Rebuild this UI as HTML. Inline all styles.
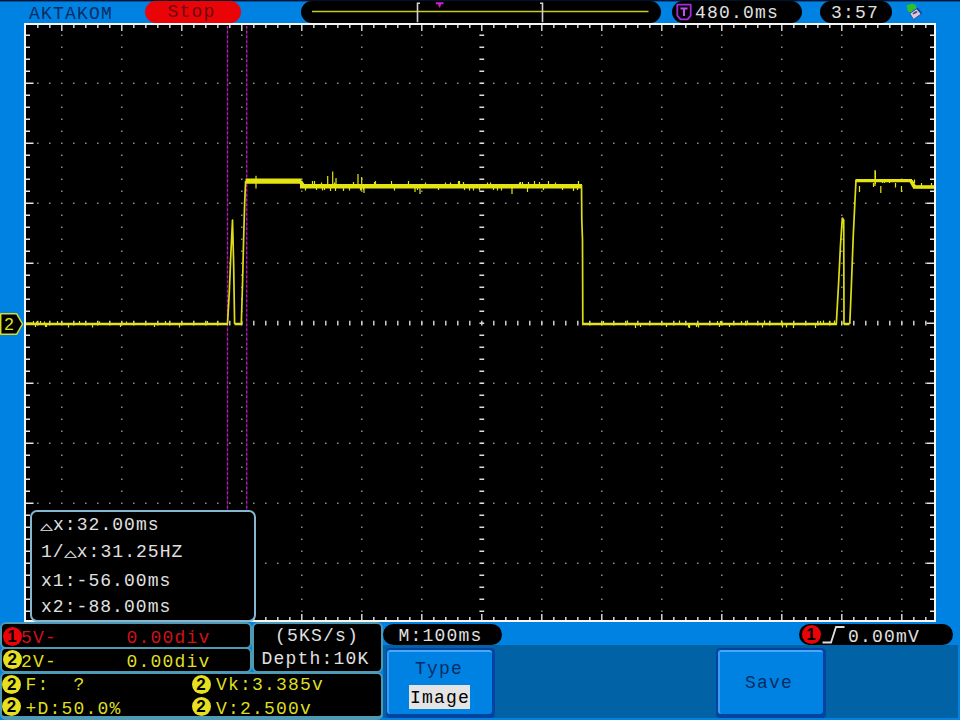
<!DOCTYPE html>
<html><head><meta charset="utf-8"><title>AKTAKOM</title>
<style>
html,body{margin:0;padding:0}
body{width:960px;height:720px;overflow:hidden;background:#0082e2;position:relative;font-family:"Liberation Mono","DejaVu Sans Mono",monospace;font-size:18px;letter-spacing:1.2px;line-height:20px;color:#e0e0e0;white-space:pre}
div,span{position:absolute;box-sizing:border-box}
.topline{left:0;top:0;width:960px;height:1px;background:#02122c;box-shadow:0 1px 0 rgba(2,30,80,0.45)}
.frame{left:24px;top:23px;width:912px;height:599px;border:2px solid #f6f6f6;background:#000}
svg{position:absolute;left:0;top:0}
.pill{background:#000;border-radius:11px}
.t{height:20px;line-height:20px}
.box{background:#000;border-radius:6px}
.bx{background:#000;border:2px solid #4e9ab4;border-radius:6px}
.ch{width:19px;height:19px;border-radius:9.5px;font-family:"Liberation Sans",sans-serif;font-weight:bold;font-size:17px;letter-spacing:0;line-height:19px;text-align:center;color:#000}
.y{color:#dede20} .r{color:#d0101a}
.nav{color:#062c62}
.cb{letter-spacing:1.05px}
.tri{position:static;display:inline-block;width:12px;font-size:14px;letter-spacing:0;text-align:center;transform:translate(-0.5px,0px) scale(1.55,0.85);transform-origin:50% 75%}
</style></head><body>
<div class="topline"></div>
<div class="t nav" style="left:29px;top:4px">AKTAKOM</div>
<div class="pill" style="left:144.5px;top:1px;width:96px;height:22px;background:#ea0408"></div>
<div class="t" style="left:167.5px;top:2px;color:#6a0810">Stop</div>
<div class="pill" style="left:301px;top:1px;width:360px;height:22px"></div>
<div class="pill" style="left:672px;top:1px;width:130px;height:22px"></div>
<div class="t" style="left:695px;top:3px">480.0ms</div>
<div class="pill" style="left:820px;top:1px;width:71.5px;height:22px"></div>
<div class="t" style="left:831px;top:3px">3:57</div>

<div class="frame"></div>

<div style="left:383px;top:645px;width:574.5px;height:72.5px;background:#0262a6"></div>

<svg width="960" height="720" viewBox="0 0 960 720">
<path d="M61.0 35.2h1.6M61.0 47.2h1.6M61.0 59.2h1.6M61.0 71.2h1.6M61.0 83.2h1.6M61.0 95.2h1.6M61.0 107.2h1.6M61.0 119.2h1.6M61.0 131.2h1.6M61.0 143.2h1.6M61.0 155.2h1.6M61.0 167.2h1.6M61.0 179.2h1.6M61.0 191.2h1.6M61.0 203.2h1.6M61.0 215.2h1.6M61.0 227.2h1.6M61.0 239.2h1.6M61.0 251.2h1.6M61.0 263.2h1.6M61.0 275.2h1.6M61.0 287.2h1.6M61.0 299.2h1.6M61.0 311.2h1.6M61.0 323.2h1.6M61.0 335.2h1.6M61.0 347.2h1.6M61.0 359.2h1.6M61.0 371.2h1.6M61.0 383.2h1.6M61.0 395.2h1.6M61.0 407.2h1.6M61.0 419.2h1.6M61.0 431.2h1.6M61.0 443.2h1.6M61.0 455.2h1.6M61.0 467.2h1.6M61.0 479.2h1.6M61.0 491.2h1.6M61.0 503.2h1.6M61.0 515.2h1.6M61.0 527.2h1.6M61.0 539.2h1.6M61.0 551.2h1.6M61.0 563.2h1.6M61.0 575.2h1.6M61.0 587.2h1.6M61.0 599.2h1.6M61.0 611.2h1.6M121.0 35.2h1.6M121.0 47.2h1.6M121.0 59.2h1.6M121.0 71.2h1.6M121.0 83.2h1.6M121.0 95.2h1.6M121.0 107.2h1.6M121.0 119.2h1.6M121.0 131.2h1.6M121.0 143.2h1.6M121.0 155.2h1.6M121.0 167.2h1.6M121.0 179.2h1.6M121.0 191.2h1.6M121.0 203.2h1.6M121.0 215.2h1.6M121.0 227.2h1.6M121.0 239.2h1.6M121.0 251.2h1.6M121.0 263.2h1.6M121.0 275.2h1.6M121.0 287.2h1.6M121.0 299.2h1.6M121.0 311.2h1.6M121.0 323.2h1.6M121.0 335.2h1.6M121.0 347.2h1.6M121.0 359.2h1.6M121.0 371.2h1.6M121.0 383.2h1.6M121.0 395.2h1.6M121.0 407.2h1.6M121.0 419.2h1.6M121.0 431.2h1.6M121.0 443.2h1.6M121.0 455.2h1.6M121.0 467.2h1.6M121.0 479.2h1.6M121.0 491.2h1.6M121.0 503.2h1.6M121.0 515.2h1.6M121.0 527.2h1.6M121.0 539.2h1.6M121.0 551.2h1.6M121.0 563.2h1.6M121.0 575.2h1.6M121.0 587.2h1.6M121.0 599.2h1.6M121.0 611.2h1.6M181.0 35.2h1.6M181.0 47.2h1.6M181.0 59.2h1.6M181.0 71.2h1.6M181.0 83.2h1.6M181.0 95.2h1.6M181.0 107.2h1.6M181.0 119.2h1.6M181.0 131.2h1.6M181.0 143.2h1.6M181.0 155.2h1.6M181.0 167.2h1.6M181.0 179.2h1.6M181.0 191.2h1.6M181.0 203.2h1.6M181.0 215.2h1.6M181.0 227.2h1.6M181.0 239.2h1.6M181.0 251.2h1.6M181.0 263.2h1.6M181.0 275.2h1.6M181.0 287.2h1.6M181.0 299.2h1.6M181.0 311.2h1.6M181.0 323.2h1.6M181.0 335.2h1.6M181.0 347.2h1.6M181.0 359.2h1.6M181.0 371.2h1.6M181.0 383.2h1.6M181.0 395.2h1.6M181.0 407.2h1.6M181.0 419.2h1.6M181.0 431.2h1.6M181.0 443.2h1.6M181.0 455.2h1.6M181.0 467.2h1.6M181.0 479.2h1.6M181.0 491.2h1.6M181.0 503.2h1.6M181.0 515.2h1.6M181.0 527.2h1.6M181.0 539.2h1.6M181.0 551.2h1.6M181.0 563.2h1.6M181.0 575.2h1.6M181.0 587.2h1.6M181.0 599.2h1.6M181.0 611.2h1.6M241.0 35.2h1.6M241.0 47.2h1.6M241.0 59.2h1.6M241.0 71.2h1.6M241.0 83.2h1.6M241.0 95.2h1.6M241.0 107.2h1.6M241.0 119.2h1.6M241.0 131.2h1.6M241.0 143.2h1.6M241.0 155.2h1.6M241.0 167.2h1.6M241.0 179.2h1.6M241.0 191.2h1.6M241.0 203.2h1.6M241.0 215.2h1.6M241.0 227.2h1.6M241.0 239.2h1.6M241.0 251.2h1.6M241.0 263.2h1.6M241.0 275.2h1.6M241.0 287.2h1.6M241.0 299.2h1.6M241.0 311.2h1.6M241.0 323.2h1.6M241.0 335.2h1.6M241.0 347.2h1.6M241.0 359.2h1.6M241.0 371.2h1.6M241.0 383.2h1.6M241.0 395.2h1.6M241.0 407.2h1.6M241.0 419.2h1.6M241.0 431.2h1.6M241.0 443.2h1.6M241.0 455.2h1.6M241.0 467.2h1.6M241.0 479.2h1.6M241.0 491.2h1.6M241.0 503.2h1.6M241.0 515.2h1.6M241.0 527.2h1.6M241.0 539.2h1.6M241.0 551.2h1.6M241.0 563.2h1.6M241.0 575.2h1.6M241.0 587.2h1.6M241.0 599.2h1.6M241.0 611.2h1.6M301.0 35.2h1.6M301.0 47.2h1.6M301.0 59.2h1.6M301.0 71.2h1.6M301.0 83.2h1.6M301.0 95.2h1.6M301.0 107.2h1.6M301.0 119.2h1.6M301.0 131.2h1.6M301.0 143.2h1.6M301.0 155.2h1.6M301.0 167.2h1.6M301.0 179.2h1.6M301.0 191.2h1.6M301.0 203.2h1.6M301.0 215.2h1.6M301.0 227.2h1.6M301.0 239.2h1.6M301.0 251.2h1.6M301.0 263.2h1.6M301.0 275.2h1.6M301.0 287.2h1.6M301.0 299.2h1.6M301.0 311.2h1.6M301.0 323.2h1.6M301.0 335.2h1.6M301.0 347.2h1.6M301.0 359.2h1.6M301.0 371.2h1.6M301.0 383.2h1.6M301.0 395.2h1.6M301.0 407.2h1.6M301.0 419.2h1.6M301.0 431.2h1.6M301.0 443.2h1.6M301.0 455.2h1.6M301.0 467.2h1.6M301.0 479.2h1.6M301.0 491.2h1.6M301.0 503.2h1.6M301.0 515.2h1.6M301.0 527.2h1.6M301.0 539.2h1.6M301.0 551.2h1.6M301.0 563.2h1.6M301.0 575.2h1.6M301.0 587.2h1.6M301.0 599.2h1.6M301.0 611.2h1.6M361.0 35.2h1.6M361.0 47.2h1.6M361.0 59.2h1.6M361.0 71.2h1.6M361.0 83.2h1.6M361.0 95.2h1.6M361.0 107.2h1.6M361.0 119.2h1.6M361.0 131.2h1.6M361.0 143.2h1.6M361.0 155.2h1.6M361.0 167.2h1.6M361.0 179.2h1.6M361.0 191.2h1.6M361.0 203.2h1.6M361.0 215.2h1.6M361.0 227.2h1.6M361.0 239.2h1.6M361.0 251.2h1.6M361.0 263.2h1.6M361.0 275.2h1.6M361.0 287.2h1.6M361.0 299.2h1.6M361.0 311.2h1.6M361.0 323.2h1.6M361.0 335.2h1.6M361.0 347.2h1.6M361.0 359.2h1.6M361.0 371.2h1.6M361.0 383.2h1.6M361.0 395.2h1.6M361.0 407.2h1.6M361.0 419.2h1.6M361.0 431.2h1.6M361.0 443.2h1.6M361.0 455.2h1.6M361.0 467.2h1.6M361.0 479.2h1.6M361.0 491.2h1.6M361.0 503.2h1.6M361.0 515.2h1.6M361.0 527.2h1.6M361.0 539.2h1.6M361.0 551.2h1.6M361.0 563.2h1.6M361.0 575.2h1.6M361.0 587.2h1.6M361.0 599.2h1.6M361.0 611.2h1.6M421.0 35.2h1.6M421.0 47.2h1.6M421.0 59.2h1.6M421.0 71.2h1.6M421.0 83.2h1.6M421.0 95.2h1.6M421.0 107.2h1.6M421.0 119.2h1.6M421.0 131.2h1.6M421.0 143.2h1.6M421.0 155.2h1.6M421.0 167.2h1.6M421.0 179.2h1.6M421.0 191.2h1.6M421.0 203.2h1.6M421.0 215.2h1.6M421.0 227.2h1.6M421.0 239.2h1.6M421.0 251.2h1.6M421.0 263.2h1.6M421.0 275.2h1.6M421.0 287.2h1.6M421.0 299.2h1.6M421.0 311.2h1.6M421.0 323.2h1.6M421.0 335.2h1.6M421.0 347.2h1.6M421.0 359.2h1.6M421.0 371.2h1.6M421.0 383.2h1.6M421.0 395.2h1.6M421.0 407.2h1.6M421.0 419.2h1.6M421.0 431.2h1.6M421.0 443.2h1.6M421.0 455.2h1.6M421.0 467.2h1.6M421.0 479.2h1.6M421.0 491.2h1.6M421.0 503.2h1.6M421.0 515.2h1.6M421.0 527.2h1.6M421.0 539.2h1.6M421.0 551.2h1.6M421.0 563.2h1.6M421.0 575.2h1.6M421.0 587.2h1.6M421.0 599.2h1.6M421.0 611.2h1.6M541.0 35.2h1.6M541.0 47.2h1.6M541.0 59.2h1.6M541.0 71.2h1.6M541.0 83.2h1.6M541.0 95.2h1.6M541.0 107.2h1.6M541.0 119.2h1.6M541.0 131.2h1.6M541.0 143.2h1.6M541.0 155.2h1.6M541.0 167.2h1.6M541.0 179.2h1.6M541.0 191.2h1.6M541.0 203.2h1.6M541.0 215.2h1.6M541.0 227.2h1.6M541.0 239.2h1.6M541.0 251.2h1.6M541.0 263.2h1.6M541.0 275.2h1.6M541.0 287.2h1.6M541.0 299.2h1.6M541.0 311.2h1.6M541.0 323.2h1.6M541.0 335.2h1.6M541.0 347.2h1.6M541.0 359.2h1.6M541.0 371.2h1.6M541.0 383.2h1.6M541.0 395.2h1.6M541.0 407.2h1.6M541.0 419.2h1.6M541.0 431.2h1.6M541.0 443.2h1.6M541.0 455.2h1.6M541.0 467.2h1.6M541.0 479.2h1.6M541.0 491.2h1.6M541.0 503.2h1.6M541.0 515.2h1.6M541.0 527.2h1.6M541.0 539.2h1.6M541.0 551.2h1.6M541.0 563.2h1.6M541.0 575.2h1.6M541.0 587.2h1.6M541.0 599.2h1.6M541.0 611.2h1.6M601.0 35.2h1.6M601.0 47.2h1.6M601.0 59.2h1.6M601.0 71.2h1.6M601.0 83.2h1.6M601.0 95.2h1.6M601.0 107.2h1.6M601.0 119.2h1.6M601.0 131.2h1.6M601.0 143.2h1.6M601.0 155.2h1.6M601.0 167.2h1.6M601.0 179.2h1.6M601.0 191.2h1.6M601.0 203.2h1.6M601.0 215.2h1.6M601.0 227.2h1.6M601.0 239.2h1.6M601.0 251.2h1.6M601.0 263.2h1.6M601.0 275.2h1.6M601.0 287.2h1.6M601.0 299.2h1.6M601.0 311.2h1.6M601.0 323.2h1.6M601.0 335.2h1.6M601.0 347.2h1.6M601.0 359.2h1.6M601.0 371.2h1.6M601.0 383.2h1.6M601.0 395.2h1.6M601.0 407.2h1.6M601.0 419.2h1.6M601.0 431.2h1.6M601.0 443.2h1.6M601.0 455.2h1.6M601.0 467.2h1.6M601.0 479.2h1.6M601.0 491.2h1.6M601.0 503.2h1.6M601.0 515.2h1.6M601.0 527.2h1.6M601.0 539.2h1.6M601.0 551.2h1.6M601.0 563.2h1.6M601.0 575.2h1.6M601.0 587.2h1.6M601.0 599.2h1.6M601.0 611.2h1.6M661.0 35.2h1.6M661.0 47.2h1.6M661.0 59.2h1.6M661.0 71.2h1.6M661.0 83.2h1.6M661.0 95.2h1.6M661.0 107.2h1.6M661.0 119.2h1.6M661.0 131.2h1.6M661.0 143.2h1.6M661.0 155.2h1.6M661.0 167.2h1.6M661.0 179.2h1.6M661.0 191.2h1.6M661.0 203.2h1.6M661.0 215.2h1.6M661.0 227.2h1.6M661.0 239.2h1.6M661.0 251.2h1.6M661.0 263.2h1.6M661.0 275.2h1.6M661.0 287.2h1.6M661.0 299.2h1.6M661.0 311.2h1.6M661.0 323.2h1.6M661.0 335.2h1.6M661.0 347.2h1.6M661.0 359.2h1.6M661.0 371.2h1.6M661.0 383.2h1.6M661.0 395.2h1.6M661.0 407.2h1.6M661.0 419.2h1.6M661.0 431.2h1.6M661.0 443.2h1.6M661.0 455.2h1.6M661.0 467.2h1.6M661.0 479.2h1.6M661.0 491.2h1.6M661.0 503.2h1.6M661.0 515.2h1.6M661.0 527.2h1.6M661.0 539.2h1.6M661.0 551.2h1.6M661.0 563.2h1.6M661.0 575.2h1.6M661.0 587.2h1.6M661.0 599.2h1.6M661.0 611.2h1.6M721.0 35.2h1.6M721.0 47.2h1.6M721.0 59.2h1.6M721.0 71.2h1.6M721.0 83.2h1.6M721.0 95.2h1.6M721.0 107.2h1.6M721.0 119.2h1.6M721.0 131.2h1.6M721.0 143.2h1.6M721.0 155.2h1.6M721.0 167.2h1.6M721.0 179.2h1.6M721.0 191.2h1.6M721.0 203.2h1.6M721.0 215.2h1.6M721.0 227.2h1.6M721.0 239.2h1.6M721.0 251.2h1.6M721.0 263.2h1.6M721.0 275.2h1.6M721.0 287.2h1.6M721.0 299.2h1.6M721.0 311.2h1.6M721.0 323.2h1.6M721.0 335.2h1.6M721.0 347.2h1.6M721.0 359.2h1.6M721.0 371.2h1.6M721.0 383.2h1.6M721.0 395.2h1.6M721.0 407.2h1.6M721.0 419.2h1.6M721.0 431.2h1.6M721.0 443.2h1.6M721.0 455.2h1.6M721.0 467.2h1.6M721.0 479.2h1.6M721.0 491.2h1.6M721.0 503.2h1.6M721.0 515.2h1.6M721.0 527.2h1.6M721.0 539.2h1.6M721.0 551.2h1.6M721.0 563.2h1.6M721.0 575.2h1.6M721.0 587.2h1.6M721.0 599.2h1.6M721.0 611.2h1.6M781.0 35.2h1.6M781.0 47.2h1.6M781.0 59.2h1.6M781.0 71.2h1.6M781.0 83.2h1.6M781.0 95.2h1.6M781.0 107.2h1.6M781.0 119.2h1.6M781.0 131.2h1.6M781.0 143.2h1.6M781.0 155.2h1.6M781.0 167.2h1.6M781.0 179.2h1.6M781.0 191.2h1.6M781.0 203.2h1.6M781.0 215.2h1.6M781.0 227.2h1.6M781.0 239.2h1.6M781.0 251.2h1.6M781.0 263.2h1.6M781.0 275.2h1.6M781.0 287.2h1.6M781.0 299.2h1.6M781.0 311.2h1.6M781.0 323.2h1.6M781.0 335.2h1.6M781.0 347.2h1.6M781.0 359.2h1.6M781.0 371.2h1.6M781.0 383.2h1.6M781.0 395.2h1.6M781.0 407.2h1.6M781.0 419.2h1.6M781.0 431.2h1.6M781.0 443.2h1.6M781.0 455.2h1.6M781.0 467.2h1.6M781.0 479.2h1.6M781.0 491.2h1.6M781.0 503.2h1.6M781.0 515.2h1.6M781.0 527.2h1.6M781.0 539.2h1.6M781.0 551.2h1.6M781.0 563.2h1.6M781.0 575.2h1.6M781.0 587.2h1.6M781.0 599.2h1.6M781.0 611.2h1.6M841.0 35.2h1.6M841.0 47.2h1.6M841.0 59.2h1.6M841.0 71.2h1.6M841.0 83.2h1.6M841.0 95.2h1.6M841.0 107.2h1.6M841.0 119.2h1.6M841.0 131.2h1.6M841.0 143.2h1.6M841.0 155.2h1.6M841.0 167.2h1.6M841.0 179.2h1.6M841.0 191.2h1.6M841.0 203.2h1.6M841.0 215.2h1.6M841.0 227.2h1.6M841.0 239.2h1.6M841.0 251.2h1.6M841.0 263.2h1.6M841.0 275.2h1.6M841.0 287.2h1.6M841.0 299.2h1.6M841.0 311.2h1.6M841.0 323.2h1.6M841.0 335.2h1.6M841.0 347.2h1.6M841.0 359.2h1.6M841.0 371.2h1.6M841.0 383.2h1.6M841.0 395.2h1.6M841.0 407.2h1.6M841.0 419.2h1.6M841.0 431.2h1.6M841.0 443.2h1.6M841.0 455.2h1.6M841.0 467.2h1.6M841.0 479.2h1.6M841.0 491.2h1.6M841.0 503.2h1.6M841.0 515.2h1.6M841.0 527.2h1.6M841.0 539.2h1.6M841.0 551.2h1.6M841.0 563.2h1.6M841.0 575.2h1.6M841.0 587.2h1.6M841.0 599.2h1.6M841.0 611.2h1.6M901.0 35.2h1.6M901.0 47.2h1.6M901.0 59.2h1.6M901.0 71.2h1.6M901.0 83.2h1.6M901.0 95.2h1.6M901.0 107.2h1.6M901.0 119.2h1.6M901.0 131.2h1.6M901.0 143.2h1.6M901.0 155.2h1.6M901.0 167.2h1.6M901.0 179.2h1.6M901.0 191.2h1.6M901.0 203.2h1.6M901.0 215.2h1.6M901.0 227.2h1.6M901.0 239.2h1.6M901.0 251.2h1.6M901.0 263.2h1.6M901.0 275.2h1.6M901.0 287.2h1.6M901.0 299.2h1.6M901.0 311.2h1.6M901.0 323.2h1.6M901.0 335.2h1.6M901.0 347.2h1.6M901.0 359.2h1.6M901.0 371.2h1.6M901.0 383.2h1.6M901.0 395.2h1.6M901.0 407.2h1.6M901.0 419.2h1.6M901.0 431.2h1.6M901.0 443.2h1.6M901.0 455.2h1.6M901.0 467.2h1.6M901.0 479.2h1.6M901.0 491.2h1.6M901.0 503.2h1.6M901.0 515.2h1.6M901.0 527.2h1.6M901.0 539.2h1.6M901.0 551.2h1.6M901.0 563.2h1.6M901.0 575.2h1.6M901.0 587.2h1.6M901.0 599.2h1.6M901.0 611.2h1.6M37.0 83.2h1.6M49.0 83.2h1.6M61.0 83.2h1.6M73.0 83.2h1.6M85.0 83.2h1.6M97.0 83.2h1.6M109.0 83.2h1.6M121.0 83.2h1.6M133.0 83.2h1.6M145.0 83.2h1.6M157.0 83.2h1.6M169.0 83.2h1.6M181.0 83.2h1.6M193.0 83.2h1.6M205.0 83.2h1.6M217.0 83.2h1.6M229.0 83.2h1.6M241.0 83.2h1.6M253.0 83.2h1.6M265.0 83.2h1.6M277.0 83.2h1.6M289.0 83.2h1.6M301.0 83.2h1.6M313.0 83.2h1.6M325.0 83.2h1.6M337.0 83.2h1.6M349.0 83.2h1.6M361.0 83.2h1.6M373.0 83.2h1.6M385.0 83.2h1.6M397.0 83.2h1.6M409.0 83.2h1.6M421.0 83.2h1.6M433.0 83.2h1.6M445.0 83.2h1.6M457.0 83.2h1.6M469.0 83.2h1.6M481.0 83.2h1.6M493.0 83.2h1.6M505.0 83.2h1.6M517.0 83.2h1.6M529.0 83.2h1.6M541.0 83.2h1.6M553.0 83.2h1.6M565.0 83.2h1.6M577.0 83.2h1.6M589.0 83.2h1.6M601.0 83.2h1.6M613.0 83.2h1.6M625.0 83.2h1.6M637.0 83.2h1.6M649.0 83.2h1.6M661.0 83.2h1.6M673.0 83.2h1.6M685.0 83.2h1.6M697.0 83.2h1.6M709.0 83.2h1.6M721.0 83.2h1.6M733.0 83.2h1.6M745.0 83.2h1.6M757.0 83.2h1.6M769.0 83.2h1.6M781.0 83.2h1.6M793.0 83.2h1.6M805.0 83.2h1.6M817.0 83.2h1.6M829.0 83.2h1.6M841.0 83.2h1.6M853.0 83.2h1.6M865.0 83.2h1.6M877.0 83.2h1.6M889.0 83.2h1.6M901.0 83.2h1.6M913.0 83.2h1.6M925.0 83.2h1.6M37.0 143.2h1.6M49.0 143.2h1.6M61.0 143.2h1.6M73.0 143.2h1.6M85.0 143.2h1.6M97.0 143.2h1.6M109.0 143.2h1.6M121.0 143.2h1.6M133.0 143.2h1.6M145.0 143.2h1.6M157.0 143.2h1.6M169.0 143.2h1.6M181.0 143.2h1.6M193.0 143.2h1.6M205.0 143.2h1.6M217.0 143.2h1.6M229.0 143.2h1.6M241.0 143.2h1.6M253.0 143.2h1.6M265.0 143.2h1.6M277.0 143.2h1.6M289.0 143.2h1.6M301.0 143.2h1.6M313.0 143.2h1.6M325.0 143.2h1.6M337.0 143.2h1.6M349.0 143.2h1.6M361.0 143.2h1.6M373.0 143.2h1.6M385.0 143.2h1.6M397.0 143.2h1.6M409.0 143.2h1.6M421.0 143.2h1.6M433.0 143.2h1.6M445.0 143.2h1.6M457.0 143.2h1.6M469.0 143.2h1.6M481.0 143.2h1.6M493.0 143.2h1.6M505.0 143.2h1.6M517.0 143.2h1.6M529.0 143.2h1.6M541.0 143.2h1.6M553.0 143.2h1.6M565.0 143.2h1.6M577.0 143.2h1.6M589.0 143.2h1.6M601.0 143.2h1.6M613.0 143.2h1.6M625.0 143.2h1.6M637.0 143.2h1.6M649.0 143.2h1.6M661.0 143.2h1.6M673.0 143.2h1.6M685.0 143.2h1.6M697.0 143.2h1.6M709.0 143.2h1.6M721.0 143.2h1.6M733.0 143.2h1.6M745.0 143.2h1.6M757.0 143.2h1.6M769.0 143.2h1.6M781.0 143.2h1.6M793.0 143.2h1.6M805.0 143.2h1.6M817.0 143.2h1.6M829.0 143.2h1.6M841.0 143.2h1.6M853.0 143.2h1.6M865.0 143.2h1.6M877.0 143.2h1.6M889.0 143.2h1.6M901.0 143.2h1.6M913.0 143.2h1.6M925.0 143.2h1.6M37.0 203.2h1.6M49.0 203.2h1.6M61.0 203.2h1.6M73.0 203.2h1.6M85.0 203.2h1.6M97.0 203.2h1.6M109.0 203.2h1.6M121.0 203.2h1.6M133.0 203.2h1.6M145.0 203.2h1.6M157.0 203.2h1.6M169.0 203.2h1.6M181.0 203.2h1.6M193.0 203.2h1.6M205.0 203.2h1.6M217.0 203.2h1.6M229.0 203.2h1.6M241.0 203.2h1.6M253.0 203.2h1.6M265.0 203.2h1.6M277.0 203.2h1.6M289.0 203.2h1.6M301.0 203.2h1.6M313.0 203.2h1.6M325.0 203.2h1.6M337.0 203.2h1.6M349.0 203.2h1.6M361.0 203.2h1.6M373.0 203.2h1.6M385.0 203.2h1.6M397.0 203.2h1.6M409.0 203.2h1.6M421.0 203.2h1.6M433.0 203.2h1.6M445.0 203.2h1.6M457.0 203.2h1.6M469.0 203.2h1.6M481.0 203.2h1.6M493.0 203.2h1.6M505.0 203.2h1.6M517.0 203.2h1.6M529.0 203.2h1.6M541.0 203.2h1.6M553.0 203.2h1.6M565.0 203.2h1.6M577.0 203.2h1.6M589.0 203.2h1.6M601.0 203.2h1.6M613.0 203.2h1.6M625.0 203.2h1.6M637.0 203.2h1.6M649.0 203.2h1.6M661.0 203.2h1.6M673.0 203.2h1.6M685.0 203.2h1.6M697.0 203.2h1.6M709.0 203.2h1.6M721.0 203.2h1.6M733.0 203.2h1.6M745.0 203.2h1.6M757.0 203.2h1.6M769.0 203.2h1.6M781.0 203.2h1.6M793.0 203.2h1.6M805.0 203.2h1.6M817.0 203.2h1.6M829.0 203.2h1.6M841.0 203.2h1.6M853.0 203.2h1.6M865.0 203.2h1.6M877.0 203.2h1.6M889.0 203.2h1.6M901.0 203.2h1.6M913.0 203.2h1.6M925.0 203.2h1.6M37.0 263.2h1.6M49.0 263.2h1.6M61.0 263.2h1.6M73.0 263.2h1.6M85.0 263.2h1.6M97.0 263.2h1.6M109.0 263.2h1.6M121.0 263.2h1.6M133.0 263.2h1.6M145.0 263.2h1.6M157.0 263.2h1.6M169.0 263.2h1.6M181.0 263.2h1.6M193.0 263.2h1.6M205.0 263.2h1.6M217.0 263.2h1.6M229.0 263.2h1.6M241.0 263.2h1.6M253.0 263.2h1.6M265.0 263.2h1.6M277.0 263.2h1.6M289.0 263.2h1.6M301.0 263.2h1.6M313.0 263.2h1.6M325.0 263.2h1.6M337.0 263.2h1.6M349.0 263.2h1.6M361.0 263.2h1.6M373.0 263.2h1.6M385.0 263.2h1.6M397.0 263.2h1.6M409.0 263.2h1.6M421.0 263.2h1.6M433.0 263.2h1.6M445.0 263.2h1.6M457.0 263.2h1.6M469.0 263.2h1.6M481.0 263.2h1.6M493.0 263.2h1.6M505.0 263.2h1.6M517.0 263.2h1.6M529.0 263.2h1.6M541.0 263.2h1.6M553.0 263.2h1.6M565.0 263.2h1.6M577.0 263.2h1.6M589.0 263.2h1.6M601.0 263.2h1.6M613.0 263.2h1.6M625.0 263.2h1.6M637.0 263.2h1.6M649.0 263.2h1.6M661.0 263.2h1.6M673.0 263.2h1.6M685.0 263.2h1.6M697.0 263.2h1.6M709.0 263.2h1.6M721.0 263.2h1.6M733.0 263.2h1.6M745.0 263.2h1.6M757.0 263.2h1.6M769.0 263.2h1.6M781.0 263.2h1.6M793.0 263.2h1.6M805.0 263.2h1.6M817.0 263.2h1.6M829.0 263.2h1.6M841.0 263.2h1.6M853.0 263.2h1.6M865.0 263.2h1.6M877.0 263.2h1.6M889.0 263.2h1.6M901.0 263.2h1.6M913.0 263.2h1.6M925.0 263.2h1.6M37.0 383.2h1.6M49.0 383.2h1.6M61.0 383.2h1.6M73.0 383.2h1.6M85.0 383.2h1.6M97.0 383.2h1.6M109.0 383.2h1.6M121.0 383.2h1.6M133.0 383.2h1.6M145.0 383.2h1.6M157.0 383.2h1.6M169.0 383.2h1.6M181.0 383.2h1.6M193.0 383.2h1.6M205.0 383.2h1.6M217.0 383.2h1.6M229.0 383.2h1.6M241.0 383.2h1.6M253.0 383.2h1.6M265.0 383.2h1.6M277.0 383.2h1.6M289.0 383.2h1.6M301.0 383.2h1.6M313.0 383.2h1.6M325.0 383.2h1.6M337.0 383.2h1.6M349.0 383.2h1.6M361.0 383.2h1.6M373.0 383.2h1.6M385.0 383.2h1.6M397.0 383.2h1.6M409.0 383.2h1.6M421.0 383.2h1.6M433.0 383.2h1.6M445.0 383.2h1.6M457.0 383.2h1.6M469.0 383.2h1.6M481.0 383.2h1.6M493.0 383.2h1.6M505.0 383.2h1.6M517.0 383.2h1.6M529.0 383.2h1.6M541.0 383.2h1.6M553.0 383.2h1.6M565.0 383.2h1.6M577.0 383.2h1.6M589.0 383.2h1.6M601.0 383.2h1.6M613.0 383.2h1.6M625.0 383.2h1.6M637.0 383.2h1.6M649.0 383.2h1.6M661.0 383.2h1.6M673.0 383.2h1.6M685.0 383.2h1.6M697.0 383.2h1.6M709.0 383.2h1.6M721.0 383.2h1.6M733.0 383.2h1.6M745.0 383.2h1.6M757.0 383.2h1.6M769.0 383.2h1.6M781.0 383.2h1.6M793.0 383.2h1.6M805.0 383.2h1.6M817.0 383.2h1.6M829.0 383.2h1.6M841.0 383.2h1.6M853.0 383.2h1.6M865.0 383.2h1.6M877.0 383.2h1.6M889.0 383.2h1.6M901.0 383.2h1.6M913.0 383.2h1.6M925.0 383.2h1.6M37.0 443.2h1.6M49.0 443.2h1.6M61.0 443.2h1.6M73.0 443.2h1.6M85.0 443.2h1.6M97.0 443.2h1.6M109.0 443.2h1.6M121.0 443.2h1.6M133.0 443.2h1.6M145.0 443.2h1.6M157.0 443.2h1.6M169.0 443.2h1.6M181.0 443.2h1.6M193.0 443.2h1.6M205.0 443.2h1.6M217.0 443.2h1.6M229.0 443.2h1.6M241.0 443.2h1.6M253.0 443.2h1.6M265.0 443.2h1.6M277.0 443.2h1.6M289.0 443.2h1.6M301.0 443.2h1.6M313.0 443.2h1.6M325.0 443.2h1.6M337.0 443.2h1.6M349.0 443.2h1.6M361.0 443.2h1.6M373.0 443.2h1.6M385.0 443.2h1.6M397.0 443.2h1.6M409.0 443.2h1.6M421.0 443.2h1.6M433.0 443.2h1.6M445.0 443.2h1.6M457.0 443.2h1.6M469.0 443.2h1.6M481.0 443.2h1.6M493.0 443.2h1.6M505.0 443.2h1.6M517.0 443.2h1.6M529.0 443.2h1.6M541.0 443.2h1.6M553.0 443.2h1.6M565.0 443.2h1.6M577.0 443.2h1.6M589.0 443.2h1.6M601.0 443.2h1.6M613.0 443.2h1.6M625.0 443.2h1.6M637.0 443.2h1.6M649.0 443.2h1.6M661.0 443.2h1.6M673.0 443.2h1.6M685.0 443.2h1.6M697.0 443.2h1.6M709.0 443.2h1.6M721.0 443.2h1.6M733.0 443.2h1.6M745.0 443.2h1.6M757.0 443.2h1.6M769.0 443.2h1.6M781.0 443.2h1.6M793.0 443.2h1.6M805.0 443.2h1.6M817.0 443.2h1.6M829.0 443.2h1.6M841.0 443.2h1.6M853.0 443.2h1.6M865.0 443.2h1.6M877.0 443.2h1.6M889.0 443.2h1.6M901.0 443.2h1.6M913.0 443.2h1.6M925.0 443.2h1.6M37.0 503.2h1.6M49.0 503.2h1.6M61.0 503.2h1.6M73.0 503.2h1.6M85.0 503.2h1.6M97.0 503.2h1.6M109.0 503.2h1.6M121.0 503.2h1.6M133.0 503.2h1.6M145.0 503.2h1.6M157.0 503.2h1.6M169.0 503.2h1.6M181.0 503.2h1.6M193.0 503.2h1.6M205.0 503.2h1.6M217.0 503.2h1.6M229.0 503.2h1.6M241.0 503.2h1.6M253.0 503.2h1.6M265.0 503.2h1.6M277.0 503.2h1.6M289.0 503.2h1.6M301.0 503.2h1.6M313.0 503.2h1.6M325.0 503.2h1.6M337.0 503.2h1.6M349.0 503.2h1.6M361.0 503.2h1.6M373.0 503.2h1.6M385.0 503.2h1.6M397.0 503.2h1.6M409.0 503.2h1.6M421.0 503.2h1.6M433.0 503.2h1.6M445.0 503.2h1.6M457.0 503.2h1.6M469.0 503.2h1.6M481.0 503.2h1.6M493.0 503.2h1.6M505.0 503.2h1.6M517.0 503.2h1.6M529.0 503.2h1.6M541.0 503.2h1.6M553.0 503.2h1.6M565.0 503.2h1.6M577.0 503.2h1.6M589.0 503.2h1.6M601.0 503.2h1.6M613.0 503.2h1.6M625.0 503.2h1.6M637.0 503.2h1.6M649.0 503.2h1.6M661.0 503.2h1.6M673.0 503.2h1.6M685.0 503.2h1.6M697.0 503.2h1.6M709.0 503.2h1.6M721.0 503.2h1.6M733.0 503.2h1.6M745.0 503.2h1.6M757.0 503.2h1.6M769.0 503.2h1.6M781.0 503.2h1.6M793.0 503.2h1.6M805.0 503.2h1.6M817.0 503.2h1.6M829.0 503.2h1.6M841.0 503.2h1.6M853.0 503.2h1.6M865.0 503.2h1.6M877.0 503.2h1.6M889.0 503.2h1.6M901.0 503.2h1.6M913.0 503.2h1.6M925.0 503.2h1.6M37.0 563.2h1.6M49.0 563.2h1.6M61.0 563.2h1.6M73.0 563.2h1.6M85.0 563.2h1.6M97.0 563.2h1.6M109.0 563.2h1.6M121.0 563.2h1.6M133.0 563.2h1.6M145.0 563.2h1.6M157.0 563.2h1.6M169.0 563.2h1.6M181.0 563.2h1.6M193.0 563.2h1.6M205.0 563.2h1.6M217.0 563.2h1.6M229.0 563.2h1.6M241.0 563.2h1.6M253.0 563.2h1.6M265.0 563.2h1.6M277.0 563.2h1.6M289.0 563.2h1.6M301.0 563.2h1.6M313.0 563.2h1.6M325.0 563.2h1.6M337.0 563.2h1.6M349.0 563.2h1.6M361.0 563.2h1.6M373.0 563.2h1.6M385.0 563.2h1.6M397.0 563.2h1.6M409.0 563.2h1.6M421.0 563.2h1.6M433.0 563.2h1.6M445.0 563.2h1.6M457.0 563.2h1.6M469.0 563.2h1.6M481.0 563.2h1.6M493.0 563.2h1.6M505.0 563.2h1.6M517.0 563.2h1.6M529.0 563.2h1.6M541.0 563.2h1.6M553.0 563.2h1.6M565.0 563.2h1.6M577.0 563.2h1.6M589.0 563.2h1.6M601.0 563.2h1.6M613.0 563.2h1.6M625.0 563.2h1.6M637.0 563.2h1.6M649.0 563.2h1.6M661.0 563.2h1.6M673.0 563.2h1.6M685.0 563.2h1.6M697.0 563.2h1.6M709.0 563.2h1.6M721.0 563.2h1.6M733.0 563.2h1.6M745.0 563.2h1.6M757.0 563.2h1.6M769.0 563.2h1.6M781.0 563.2h1.6M793.0 563.2h1.6M805.0 563.2h1.6M817.0 563.2h1.6M829.0 563.2h1.6M841.0 563.2h1.6M853.0 563.2h1.6M865.0 563.2h1.6M877.0 563.2h1.6M889.0 563.2h1.6M901.0 563.2h1.6M913.0 563.2h1.6M925.0 563.2h1.6" stroke="#868686" stroke-width="1.4" fill="none"/>
<path d="M479.4 35.2h4.8M479.4 47.2h4.8M479.4 59.2h4.8M479.4 71.2h4.8M479.4 83.2h4.8M479.4 95.2h4.8M479.4 107.2h4.8M479.4 119.2h4.8M479.4 131.2h4.8M479.4 143.2h4.8M479.4 155.2h4.8M479.4 167.2h4.8M479.4 179.2h4.8M479.4 191.2h4.8M479.4 203.2h4.8M479.4 215.2h4.8M479.4 227.2h4.8M479.4 239.2h4.8M479.4 251.2h4.8M479.4 263.2h4.8M479.4 275.2h4.8M479.4 287.2h4.8M479.4 299.2h4.8M479.4 311.2h4.8M479.4 323.2h4.8M479.4 335.2h4.8M479.4 347.2h4.8M479.4 359.2h4.8M479.4 371.2h4.8M479.4 383.2h4.8M479.4 395.2h4.8M479.4 407.2h4.8M479.4 419.2h4.8M479.4 431.2h4.8M479.4 443.2h4.8M479.4 455.2h4.8M479.4 467.2h4.8M479.4 479.2h4.8M479.4 491.2h4.8M479.4 503.2h4.8M479.4 515.2h4.8M479.4 527.2h4.8M479.4 539.2h4.8M479.4 551.2h4.8M479.4 563.2h4.8M479.4 575.2h4.8M479.4 587.2h4.8M479.4 599.2h4.8M479.4 611.2h4.8" stroke="#dcdcdc" stroke-width="1.4" fill="none"/>
<path d="M37.8 320.8v4.8M49.8 320.8v4.8M61.8 320.8v4.8M73.8 320.8v4.8M85.8 320.8v4.8M97.8 320.8v4.8M109.8 320.8v4.8M121.8 320.8v4.8M133.8 320.8v4.8M145.8 320.8v4.8M157.8 320.8v4.8M169.8 320.8v4.8M181.8 320.8v4.8M193.8 320.8v4.8M205.8 320.8v4.8M217.8 320.8v4.8M229.8 320.8v4.8M241.8 320.8v4.8M253.8 320.8v4.8M265.8 320.8v4.8M277.8 320.8v4.8M289.8 320.8v4.8M301.8 320.8v4.8M313.8 320.8v4.8M325.8 320.8v4.8M337.8 320.8v4.8M349.8 320.8v4.8M361.8 320.8v4.8M373.8 320.8v4.8M385.8 320.8v4.8M397.8 320.8v4.8M409.8 320.8v4.8M421.8 320.8v4.8M433.8 320.8v4.8M445.8 320.8v4.8M457.8 320.8v4.8M469.8 320.8v4.8M481.8 320.8v4.8M493.8 320.8v4.8M505.8 320.8v4.8M517.8 320.8v4.8M529.8 320.8v4.8M541.8 320.8v4.8M553.8 320.8v4.8M565.8 320.8v4.8M577.8 320.8v4.8M589.8 320.8v4.8M601.8 320.8v4.8M613.8 320.8v4.8M625.8 320.8v4.8M637.8 320.8v4.8M649.8 320.8v4.8M661.8 320.8v4.8M673.8 320.8v4.8M685.8 320.8v4.8M697.8 320.8v4.8M709.8 320.8v4.8M721.8 320.8v4.8M733.8 320.8v4.8M745.8 320.8v4.8M757.8 320.8v4.8M769.8 320.8v4.8M781.8 320.8v4.8M793.8 320.8v4.8M805.8 320.8v4.8M817.8 320.8v4.8M829.8 320.8v4.8M841.8 320.8v4.8M853.8 320.8v4.8M865.8 320.8v4.8M877.8 320.8v4.8M889.8 320.8v4.8M901.8 320.8v4.8M913.8 320.8v4.8M925.8 320.8v4.8" stroke="#dcdcdc" stroke-width="1.4" fill="none"/>
<path d="M37.8 25.0v3M37.8 620.0v-3M49.8 25.0v3M49.8 620.0v-3M61.8 25.0v6M61.8 620.0v-6M73.8 25.0v3M73.8 620.0v-3M85.8 25.0v3M85.8 620.0v-3M97.8 25.0v3M97.8 620.0v-3M109.8 25.0v3M109.8 620.0v-3M121.8 25.0v6M121.8 620.0v-6M133.8 25.0v3M133.8 620.0v-3M145.8 25.0v3M145.8 620.0v-3M157.8 25.0v3M157.8 620.0v-3M169.8 25.0v3M169.8 620.0v-3M181.8 25.0v6M181.8 620.0v-6M193.8 25.0v3M193.8 620.0v-3M205.8 25.0v3M205.8 620.0v-3M217.8 25.0v3M217.8 620.0v-3M229.8 25.0v3M229.8 620.0v-3M241.8 25.0v6M241.8 620.0v-6M253.8 25.0v3M253.8 620.0v-3M265.8 25.0v3M265.8 620.0v-3M277.8 25.0v3M277.8 620.0v-3M289.8 25.0v3M289.8 620.0v-3M301.8 25.0v6M301.8 620.0v-6M313.8 25.0v3M313.8 620.0v-3M325.8 25.0v3M325.8 620.0v-3M337.8 25.0v3M337.8 620.0v-3M349.8 25.0v3M349.8 620.0v-3M361.8 25.0v6M361.8 620.0v-6M373.8 25.0v3M373.8 620.0v-3M385.8 25.0v3M385.8 620.0v-3M397.8 25.0v3M397.8 620.0v-3M409.8 25.0v3M409.8 620.0v-3M421.8 25.0v6M421.8 620.0v-6M433.8 25.0v3M433.8 620.0v-3M445.8 25.0v3M445.8 620.0v-3M457.8 25.0v3M457.8 620.0v-3M469.8 25.0v3M469.8 620.0v-3M481.8 25.0v6M481.8 620.0v-6M493.8 25.0v3M493.8 620.0v-3M505.8 25.0v3M505.8 620.0v-3M517.8 25.0v3M517.8 620.0v-3M529.8 25.0v3M529.8 620.0v-3M541.8 25.0v6M541.8 620.0v-6M553.8 25.0v3M553.8 620.0v-3M565.8 25.0v3M565.8 620.0v-3M577.8 25.0v3M577.8 620.0v-3M589.8 25.0v3M589.8 620.0v-3M601.8 25.0v6M601.8 620.0v-6M613.8 25.0v3M613.8 620.0v-3M625.8 25.0v3M625.8 620.0v-3M637.8 25.0v3M637.8 620.0v-3M649.8 25.0v3M649.8 620.0v-3M661.8 25.0v6M661.8 620.0v-6M673.8 25.0v3M673.8 620.0v-3M685.8 25.0v3M685.8 620.0v-3M697.8 25.0v3M697.8 620.0v-3M709.8 25.0v3M709.8 620.0v-3M721.8 25.0v6M721.8 620.0v-6M733.8 25.0v3M733.8 620.0v-3M745.8 25.0v3M745.8 620.0v-3M757.8 25.0v3M757.8 620.0v-3M769.8 25.0v3M769.8 620.0v-3M781.8 25.0v6M781.8 620.0v-6M793.8 25.0v3M793.8 620.0v-3M805.8 25.0v3M805.8 620.0v-3M817.8 25.0v3M817.8 620.0v-3M829.8 25.0v3M829.8 620.0v-3M841.8 25.0v6M841.8 620.0v-6M853.8 25.0v3M853.8 620.0v-3M865.8 25.0v3M865.8 620.0v-3M877.8 25.0v3M877.8 620.0v-3M889.8 25.0v3M889.8 620.0v-3M901.8 25.0v6M901.8 620.0v-6M913.8 25.0v3M913.8 620.0v-3M925.8 25.0v3M925.8 620.0v-3M26.0 35.2h4M934.0 35.2h-4M26.0 47.2h4M934.0 47.2h-4M26.0 59.2h4M934.0 59.2h-4M26.0 71.2h4M934.0 71.2h-4M26.0 83.2h7.5M934.0 83.2h-7.5M26.0 95.2h4M934.0 95.2h-4M26.0 107.2h4M934.0 107.2h-4M26.0 119.2h4M934.0 119.2h-4M26.0 131.2h4M934.0 131.2h-4M26.0 143.2h7.5M934.0 143.2h-7.5M26.0 155.2h4M934.0 155.2h-4M26.0 167.2h4M934.0 167.2h-4M26.0 179.2h4M934.0 179.2h-4M26.0 191.2h4M934.0 191.2h-4M26.0 203.2h7.5M934.0 203.2h-7.5M26.0 215.2h4M934.0 215.2h-4M26.0 227.2h4M934.0 227.2h-4M26.0 239.2h4M934.0 239.2h-4M26.0 251.2h4M934.0 251.2h-4M26.0 263.2h7.5M934.0 263.2h-7.5M26.0 275.2h4M934.0 275.2h-4M26.0 287.2h4M934.0 287.2h-4M26.0 299.2h4M934.0 299.2h-4M26.0 311.2h4M934.0 311.2h-4M26.0 323.2h7.5M934.0 323.2h-7.5M26.0 335.2h4M934.0 335.2h-4M26.0 347.2h4M934.0 347.2h-4M26.0 359.2h4M934.0 359.2h-4M26.0 371.2h4M934.0 371.2h-4M26.0 383.2h7.5M934.0 383.2h-7.5M26.0 395.2h4M934.0 395.2h-4M26.0 407.2h4M934.0 407.2h-4M26.0 419.2h4M934.0 419.2h-4M26.0 431.2h4M934.0 431.2h-4M26.0 443.2h7.5M934.0 443.2h-7.5M26.0 455.2h4M934.0 455.2h-4M26.0 467.2h4M934.0 467.2h-4M26.0 479.2h4M934.0 479.2h-4M26.0 491.2h4M934.0 491.2h-4M26.0 503.2h7.5M934.0 503.2h-7.5M26.0 515.2h4M934.0 515.2h-4M26.0 527.2h4M934.0 527.2h-4M26.0 539.2h4M934.0 539.2h-4M26.0 551.2h4M934.0 551.2h-4M26.0 563.2h7.5M934.0 563.2h-7.5M26.0 575.2h4M934.0 575.2h-4M26.0 587.2h4M934.0 587.2h-4M26.0 599.2h4M934.0 599.2h-4M26.0 611.2h4M934.0 611.2h-4" stroke="#e6e6e6" stroke-width="1.4" fill="none"/>
<path d="M227.5 26.0V619.0" stroke="#4a0a4a" stroke-width="1.3" fill="none"/>
<path d="M227.5 26.0V619.0" stroke="#b820b8" stroke-width="1.3" stroke-dasharray="2.4 2.4" fill="none"/>
<path d="M246.7 26.0V619.0" stroke="#4a0a4a" stroke-width="1.3" fill="none"/>
<path d="M246.7 26.0V619.0" stroke="#b820b8" stroke-width="1.3" stroke-dasharray="2.4 2.4" fill="none"/>
<path d="M26 324.0H228" stroke="#e4e412" stroke-width="2.5" fill="none"/>
<path d="M234.5 324.0H241.5" stroke="#e4e412" stroke-width="2.5" fill="none"/>
<path d="M245.5 181.2H301.5" stroke="#e4e412" stroke-width="5.2" fill="none"/>
<path d="M300 186.3H582" stroke="#e4e412" stroke-width="4.4" fill="none"/>
<path d="M582 324.0H837" stroke="#e4e412" stroke-width="2.5" fill="none"/>
<path d="M843.5 324.0H849.5" stroke="#e4e412" stroke-width="2.5" fill="none"/>
<path d="M855.5 180.6H912" stroke="#e4e412" stroke-width="3.3" fill="none"/>
<path d="M913 187H934" stroke="#e4e412" stroke-width="3.6" fill="none"/>
<path d="M300.5 181.5L303.5 186.3M911 180.8L914.5 187" stroke="#e4e412" stroke-width="3.8" fill="none"/>
<path d="M227.5 324L229.3 292L230.8 255L232.5 220L233.6 262L234.6 324M241.3 324L242.5 285L243.6 240L244.6 205L245.6 181M581.5 185L581.8 220L582.5 240L582.8 325M836.3 324L838.5 285L840.5 245L842.3 218L843.7 220L844 324M849.8 324L851.2 290L853.3 235L855 200L856 180" stroke="#dede14" stroke-width="1.7" fill="none" stroke-linejoin="round"/>
<path d="M33.5 324.0V321.0M35.5 324.0V327.0M36.5 324.0V321.5M40.5 324.0V321.0M44.5 324.0V321.5M45.5 324.0V327.0M46.5 324.0V327.0M57.5 324.0V321.0M68.5 324.0V327.5M79.5 324.0V321.0M92.5 324.0V327.5M99.5 324.0V321.5M120.5 324.0V327.0M126.5 324.0V321.5M154.5 324.0V327.0M165.5 324.0V321.0M179.5 324.0V327.5M207.5 324.0V321.0M217.5 324.0V321.0M603.5 324.0V321.0M627.5 324.0V320.5M635.5 324.0V328.0M640.5 324.0V327.0M666.5 324.0V327.0M679.5 324.0V320.5M688.5 324.0V327.5M689.5 324.0V328.0M696.5 324.0V327.0M698.5 324.0V327.5M717.5 324.0V321.0M719.5 324.0V327.0M720.5 324.0V321.0M729.5 324.0V327.0M741.5 324.0V321.0M747.5 324.0V320.5M762.5 324.0V327.5M764.5 324.0V320.5M781.5 324.0V320.5M782.5 324.0V327.5M786.5 324.0V327.5M793.5 324.0V328.0M815.5 324.0V328.0M820.5 324.0V321.0M823.5 324.0V320.5M829.5 324.0V321.0M834.5 324.0V320.5M305.5 186.0V190.5M312.5 186.0V181.0M314.5 186.0V181.0M316.5 186.0V190.0M321.5 186.0V182.5M322.5 186.0V190.5M324.5 186.0V190.0M330.5 186.0V191.0M334.5 186.0V182.5M335.5 186.0V191.0M343.5 186.0V191.0M349.5 186.0V190.5M353.5 186.0V182.0M360.5 186.0V190.5M361.5 186.0V190.5M363.5 186.0V190.0M374.5 186.0V182.0M375.5 186.0V181.0M391.5 186.0V181.0M394.5 186.0V190.5M408.5 186.0V181.0M417.5 186.0V190.0M425.5 186.0V182.5M438.5 186.0V190.0M445.5 186.0V182.5M450.5 186.0V182.5M458.5 186.0V181.0M459.5 186.0V181.0M463.5 186.0V182.0M464.5 186.0V190.0M469.5 186.0V190.5M473.5 186.0V190.5M479.5 186.0V190.5M487.5 186.0V182.5M490.5 186.0V182.5M493.5 186.0V190.0M497.5 186.0V190.5M501.5 186.0V190.5M519.5 186.0V182.5M520.5 186.0V182.0M522.5 186.0V182.0M528.5 186.0V182.0M534.5 186.0V181.0M539.5 186.0V182.0M543.5 186.0V190.0M548.5 186.0V181.0M555.5 186.0V182.5M562.5 186.0V190.0M573.5 186.0V191.0M577.5 186.0V190.0M578.5 186.0V181.0M873.5 183.0V187.0M882.5 183.0V179.0M884.5 183.0V179.0M889.5 183.0V179.5M895.5 183.0V187.5M914.5 183.0V179.5M921.5 183.0V188.0M931.5 183.0V188.0M327.7 186.0V176.0M332.7 186.0V171.5M336.0 186.0V178.0M358.0 186.0V174.0M361.7 186.0V177.0M512.0 186.0V194.0M527.5 186.0V192.0M364.0 186.0V193.0M415.0 186.0V192.0M420.0 186.0V194.0M256.0 186.0V188.5M875.0 186.0V170.0M880.8 186.0V193.0M859.5 186.0V192.0M901.5 186.0V192.0M256 175.8V186M875.4 171V184" stroke="#e4e412" stroke-width="1.2" fill="none"/>
<path d="M312 11.5H648.5" stroke="#cccc20" stroke-width="1.6" fill="none"/>
<path d="M420 3.3h-2.5v19M540 3.3h2.5v19" stroke="#d0d0d0" stroke-width="1.6" fill="none"/>
<path d="M435.8 2.3h7.6v1.9h-2.3l-1 3.3h-1l-1 -3.3h-2.3z" fill="#d41cd4"/>
<path d="M677.3 4.6h13.4v11l-3.2 3.8h-7l-3.2 -3.8z" fill="none" stroke="#a42cdc" stroke-width="1.8" stroke-linejoin="round"/>
<path d="M680.5 8.5h7M684 8.5v7.5" stroke="#c44cf4" stroke-width="2" fill="none"/>
<path d="M0.7 313.8h16l5.8 10.2l-5.8 10.2H0.7z" fill="#000" stroke="#dcdc20" stroke-width="1.5" stroke-linejoin="round"/>
<text x="4.3" y="330" font-family="Liberation Sans, sans-serif" font-size="17" fill="#e4e420">2</text>
<g><path d="M906.5 5.5l5.5 -2l4 1.5l0.5 3.5l-3.5 1.5l-1.5 3l-3.5 -1.5z" fill="#30c028"/><path d="M909.8 13.5l7.2 -5l4.5 5.2l-8 5.8z" fill="#e2c4d4" stroke="#2456b4" stroke-width="1"/><path d="M917 8.3l4.6 5.4" stroke="#0a3a9a" stroke-width="1.6" fill="none"/><path d="M912.5 13.2l4 -2.4l1 1.4l-4 2.4z" fill="#3a4a80"/></g>
</svg>

<div class="box" style="left:29.5px;top:510px;width:226px;height:112px;border:2px solid #86b6d2;border-radius:7px"></div>
<div class="t cb" style="left:41px;top:515px"><span class="tri">△</span>x:32.00ms</div>
<div class="t cb" style="left:41px;top:542px">1/<span class="tri">△</span>x:31.25HZ</div>
<div class="t cb" style="left:41px;top:570.5px">x1:-56.00ms</div>
<div class="t cb" style="left:41px;top:596.5px">x2:-88.00ms</div>

<div class="bx" style="left:0;top:621.5px;width:251.5px;height:27px"></div>
<div class="bx" style="left:0;top:646.5px;width:251.5px;height:26px"></div>
<div class="bx" style="left:0;top:671.5px;width:383px;height:48.5px;border-bottom-width:4px"></div>
<div class="bx" style="left:251.5px;top:621.5px;width:131px;height:51px"></div>

<div class="ch" style="left:2.5px;top:626.5px;background:#ea0408">1</div>
<div class="t r" style="left:21px;top:627.5px">5V-</div>
<div class="t r" style="left:126.5px;top:627.5px">0.00div</div>
<div class="ch" style="left:2.8px;top:650px;background:#e6e020">2</div>
<div class="t y" style="left:21px;top:652px">2V-</div>
<div class="t y" style="left:126.5px;top:652px">0.00div</div>

<div class="ch" style="left:2.2px;top:675px;background:#e6e020">2</div>
<div class="t y" style="left:25.5px;top:675px">F:  ?</div>
<div class="ch" style="left:2px;top:697.3px;background:#e6e020">2</div>
<div class="t y" style="left:25.5px;top:698.5px">+D:50.0%</div>
<div class="ch" style="left:191.5px;top:675px;background:#e6e020">2</div>
<div class="t y" style="left:216px;top:675px">Vk:3.385v</div>
<div class="ch" style="left:191.5px;top:697.3px;background:#e6e020">2</div>
<div class="t y" style="left:216px;top:698.5px">V:2.500v</div>

<div class="t" style="left:275px;top:625.7px">(5KS/s)</div>
<div class="t" style="left:261.5px;top:649px">Depth:10K</div>

<div class="pill" style="left:383px;top:623.5px;width:119px;height:21.5px"></div>
<div class="t" style="left:398.5px;top:625.7px">M:100ms</div>

<div style="left:385.5px;top:648px;width:109.5px;height:69.5px;background:#0444a0;border-radius:4px"></div><div style="left:387.0px;top:649.5px;width:105.3px;height:64.7px;background:#0082e2;border-top:2px solid #4aa6f8;border-left:2px solid #3c9cf2;border-radius:3px"></div>
<div class="t nav" style="left:415px;top:659px">Type</div>
<div style="left:409px;top:685px;width:60.5px;height:24px;background:#e4e4e4"></div>
<div class="t" style="left:410px;top:688px;color:#000">Image</div>

<div style="left:716px;top:648px;width:109.5px;height:69.5px;background:#0444a0;border-radius:4px"></div><div style="left:717.5px;top:649.5px;width:105.3px;height:64.7px;background:#0082e2;border-top:2px solid #4aa6f8;border-left:2px solid #3c9cf2;border-radius:3px"></div>
<div class="t nav" style="left:745px;top:673px">Save</div>

<div class="pill" style="left:798.5px;top:623.5px;width:154px;height:21.5px"></div>
<div class="ch" style="left:801.5px;top:624.5px;background:#ea0408">1</div>
<div class="t" style="left:848px;top:627.3px">0.00mV</div>
<svg width="960" height="720" viewBox="0 0 960 720">
<path d="M822.5 642.5h8.5l5 -15.5h8.5" stroke="#e0e0e0" stroke-width="1.8" fill="none"/>
</svg>
</body></html>
